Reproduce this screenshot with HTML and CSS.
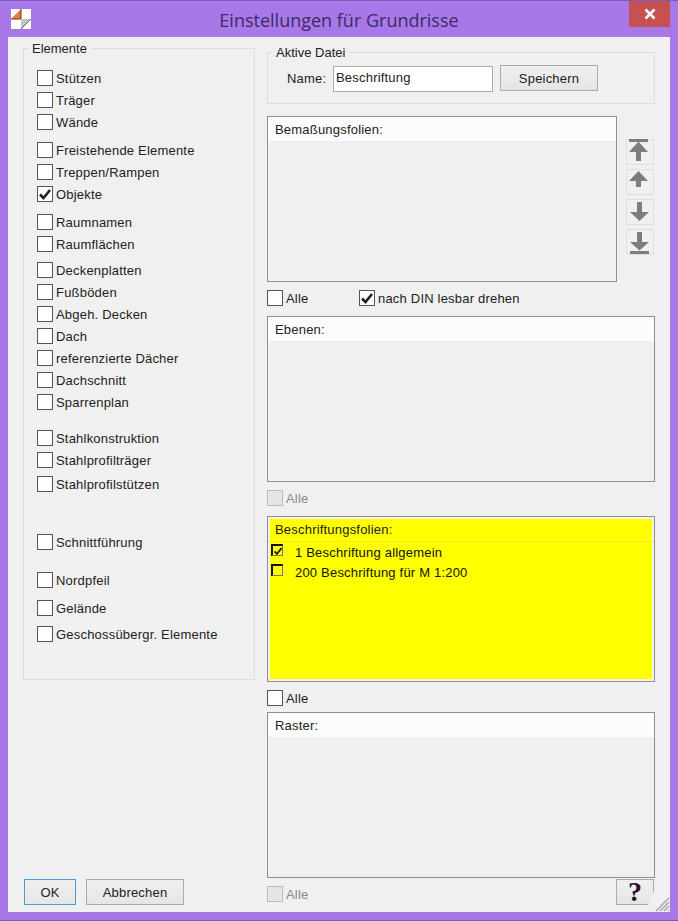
FILE: index.html
```html
<!DOCTYPE html>
<html lang="de">
  <head>
    <meta charset="UTF-8" />
    <title>Einstellungen für Grundrisse</title>
    <link rel="stylesheet" href="styles.css">
  </head>
  <body>
    <svg class="defs" width="0" height="0">
      <symbol id="tick" viewBox="0 0 14 14">
        <path d="M2 7.5 L5.5 11 L12 3" fill="none" stroke="#222" stroke-width="2.6" />
      </symbol>
    </svg>

    <div class="window">
      <!-- Title bar -->
      <div class="titlebar">
        <svg class="logo" width="20" height="20" viewBox="0 0 20 20">
          <rect width="20" height="20" fill="#fff" />
          <path d="M0 10 L10 0 V10 Z" fill="#ee7a3a" />
          <path d="M10 10 H20 L10 20 Z" fill="#c4c4c4" />
          <path d="M10 0 V10 H0" fill="none" stroke="#5a3a2a" stroke-width="1" />
          <path d="M20 10 L10 20" fill="none" stroke="#666" stroke-width="1" />
        </svg>
        <div class="title">Einstellungen für Grundrisse</div>
        <div class="close">
          <svg width="12" height="12" viewBox="0 0 12 12">
            <path d="M1.5 1.5 L10.5 10.5 M10.5 1.5 L1.5 10.5" stroke="#fff" stroke-width="2.6" />
          </svg>
        </div>
      </div>

      <div class="client">
        <!-- Left column -->
        <div class="left">
          <fieldset class="group elements">
            <legend>Elemente</legend>
            <div class="elements-body">
              <div class="check-group">
                <label class="check"><span class="box"></span>Stützen</label>
                <label class="check"><span class="box"></span>Träger</label>
                <label class="check"><span class="box"></span>Wände</label>
              </div>
              <div class="check-group gap-6">
                <label class="check"><span class="box"></span>Freistehende Elemente</label>
                <label class="check"><span class="box"></span>Treppen/Rampen</label>
                <label class="check"><span class="box"><svg><use href="#tick" /></svg></span>Objekte</label>
              </div>
              <div class="check-group gap-6">
                <label class="check"><span class="box"></span>Raumnamen</label>
                <label class="check"><span class="box"></span>Raumflächen</label>
              </div>
              <div class="check-group gap-4">
                <label class="check"><span class="box"></span>Deckenplatten</label>
                <label class="check"><span class="box"></span>Fußböden</label>
                <label class="check"><span class="box"></span>Abgeh. Decken</label>
                <label class="check"><span class="box"></span>Dach</label>
                <label class="check"><span class="box"></span>referenzierte Dächer</label>
                <label class="check"><span class="box"></span>Dachschnitt</label>
                <label class="check"><span class="box"></span>Sparrenplan</label>
              </div>
              <div class="check-group gap-14">
                <label class="check"><span class="box"></span>Stahlkonstruktion</label>
                <label class="check"><span class="box"></span>Stahlprofilträger</label>
              </div>
              <div class="check-group gap-2">
                <label class="check"><span class="box"></span>Stahlprofilstützen</label>
              </div>
              <div class="check-group gap-36">
                <label class="check"><span class="box"></span>Schnittführung</label>
              </div>
              <div class="check-group gap-16">
                <label class="check"><span class="box"></span>Nordpfeil</label>
              </div>
              <div class="check-group gap-6">
                <label class="check"><span class="box"></span>Gelände</label>
              </div>
              <div class="check-group gap-4">
                <label class="check"><span class="box"></span>Geschossübergr. Elemente</label>
              </div>
            </div>
          </fieldset>
          <div class="actions">
            <button class="btn btn-ok">OK</button>
            <button class="btn btn-cancel">Abbrechen</button>
          </div>
        </div>

        <!-- Right column -->
        <div class="right">
          <fieldset class="group active-file">
            <legend>Aktive Datei</legend>
            <div class="active-file-body">
              <span class="name-label">Name:</span>
              <div class="name-input">Beschriftung</div>
              <button class="btn btn-save">Speichern</button>
            </div>
          </fieldset>

          <div class="list-with-arrows">
            <div class="list list-short">
              <div class="list-head">Bemaßungsfolien:</div>
            </div>
            <div class="arrows">
              <div class="arrow">
                <svg width="26" height="24" viewBox="1 1 26 24"><path d="M3 0 H22 V3 H3 Z M12.5 2.5 L22 13 H15 V22 H10 V13 H3 Z" fill="#7d7d7d" /></svg>
              </div>
              <div class="arrow">
                <svg width="26" height="24" viewBox="1 1 26 24"><path d="M12.5 2 L22 12 H15 V18 H10 V12 H3 Z" fill="#7d7d7d" /></svg>
              </div>
              <div class="arrow">
                <svg width="26" height="24" viewBox="1 1 26 24"><path d="M11 3 H16 V13 H23 L13.5 22 L4 13 H11 Z" fill="#7d7d7d" /></svg>
              </div>
              <div class="arrow">
                <svg width="26" height="24" viewBox="1 1 26 24"><path d="M11 3 H16 V13 H23 L13.5 21.5 L4 13 H11 Z M4 22 H23 V25 H4 Z" fill="#7d7d7d" /></svg>
              </div>
            </div>
          </div>

          <div class="all-row">
            <label class="check check-all"><span class="box"></span>Alle</label>
            <label class="check check-din"><span class="box"><svg><use href="#tick" /></svg></span>nach DIN lesbar drehen</label>
          </div>

          <div class="list">
            <div class="list-head">Ebenen:</div>
          </div>
          <div class="all-row">
            <label class="check disabled"><span class="box"></span>Alle</label>
          </div>

          <div class="list list-yellow">
            <div class="list-head">Beschriftungsfolien:</div>
            <div class="list-item"><span class="mini-box"><svg><use href="#tick" /></svg></span>1 Beschriftung allgemein</div>
            <div class="list-item"><span class="mini-box"></span>200 Beschriftung für M 1:200</div>
          </div>
          <div class="all-row all-row-tight">
            <label class="check"><span class="box"></span>Alle</label>
          </div>

          <div class="list">
            <div class="list-head">Raster:</div>
          </div>
          <div class="all-row bottom-row">
            <label class="check disabled"><span class="box"></span>Alle</label>
            <button class="btn btn-help">?</button>
          </div>
        </div>

        <svg class="grip" width="24" height="24" viewBox="0 0 24 24">
          <path d="M2 17 L9 1 H24 V24 H2 Z" fill="#f0f0f0" />
          <path d="M23 10 L10 23 M23 14 L14 23 M23 18 L18 23 M23 22 L22 23" stroke="#a9a9a9" stroke-width="1.6" />
        </svg>
      </div>
    </div>
  </body>
</html>
```

FILE: styles.css
```css
* {
  box-sizing: border-box;
}

html,
body {
  margin: 0;
  padding: 0;
}

body {
  font-family: "Liberation Sans", Arial, sans-serif;
  font-size: 13px;
  color: #222;
}

.defs {
  display: block;
  height: 0;
}

.window {
  width: 678px;
  height: 921px;
  background-color: #a878e9;
  border-top: 1px solid #7b5bb5;
  border-bottom: 1px solid #7b5bb5;
  padding: 0 8px 8px 8px;
  display: flex;
  flex-direction: column;
}

/* Title bar */
.titlebar {
  height: 36px;
  flex: none;
  display: flex;
  align-items: flex-start;
  margin: 0 -8px;
  padding-left: 11px;
}

.logo {
  flex: none;
  margin-top: 8px;
}

.title {
  flex: 1;
  font-family: "Open Sans", sans-serif;
  font-size: 18px;
  line-height: 24px;
  margin-top: 7px;
  text-align: center;
  color: #3b2b63;
  padding-left: 18px;
}

.close {
  flex: none;
  width: 41px;
  height: 26px;
  margin-right: 8px;
  background-color: #c75050;
  display: flex;
  align-items: center;
  justify-content: center;
}

/* Client area */
.client {
  position: relative;
  flex: 1;
  background-color: #f0f0f0;
  display: flex;
  padding: 0 15px 0 15px;
}

.left {
  width: 232px;
  flex: none;
  display: flex;
  flex-direction: column;
  margin-right: 12px;
}

.right {
  width: 388px;
  flex: none;
}

.group {
  margin: 0;
  min-width: 0;
  border: 1px solid #dcdcdc;
  padding: 0;
}

.group legend {
  padding: 0 4px;
  line-height: 15px;
  margin-left: 4px;
}

.elements {
  height: 639px;
  margin-top: 4px;
}

.elements-body {
  padding: 11px 0 0 13px;
}

.check-group {
  display: flex;
  flex-direction: column;
}

.gap-2 { margin-top: 2px; }
.gap-4 { margin-top: 4px; }
.gap-6 { margin-top: 6px; }
.gap-14 { margin-top: 14px; }
.gap-16 { margin-top: 16px; }
.gap-36 { margin-top: 36px; }

.check {
  display: flex;
  align-items: center;
  height: 22px;
  letter-spacing: 0.2px;
}

.box {
  width: 16px;
  height: 16px;
  flex: none;
  margin-right: 3px;
  background-color: #fff;
  border: 1px solid #555;
  display: block;
}

.box svg {
  display: block;
  width: 14px;
  height: 14px;
}

.check.disabled {
  color: #8a8a8a;
}

.check.disabled .box {
  background-color: #e6e6e6;
  border-color: #bcbcbc;
}

.actions {
  display: flex;
  gap: 10px;
  margin-top: 199px;
  padding-left: 1px;
}

.btn {
  font-family: inherit;
  font-size: 13px;
  letter-spacing: 0.2px;
  color: #222;
  height: 26px;
  padding: 0;
  border: 1px solid #acacac;
  background: linear-gradient(#f0f0f0, #e5e5e5);
}

.btn-ok {
  width: 52px;
  border-color: #4a9ad4;
}

.btn-cancel {
  width: 98px;
}

/* Active file box */
.active-file {
  height: 59px;
  margin-top: 8px;
}

.active-file-body {
  display: flex;
  align-items: flex-start;
  padding: 6px 0 0 19px;
}

.name-label {
  width: 46px;
  line-height: 26px;
  letter-spacing: 0.2px;
}

.name-input {
  width: 160px;
  height: 26px;
  background-color: #fff;
  border: 1px solid #aaa;
  line-height: 22px;
  padding-left: 2px;
  letter-spacing: 0.2px;
}

.btn-save {
  width: 98px;
  margin-left: 7px;
  margin-top: -1px;
}

/* Lists */
.list-with-arrows {
  display: flex;
  margin-top: 12px;
}

.list {
  height: 166px;
  border: 1px solid #8a8f98;
  background-color: #f0f0f0;
}

.list-short {
  width: 350px;
}

.list-head {
  height: 24px;
  line-height: 26px;
  padding-left: 7px;
  background-color: #fcfcfd;
  letter-spacing: 0.2px;
}

.list-yellow {
  background-color: #ffff00;
  border-color: #8a8f98;
  box-shadow: inset 0 0 0 2px #f2f2e6;
}

.list-yellow .list-head {
  background-color: transparent;
  border-bottom: 1px solid #eeee20;
  height: 25px;
}

.list-item {
  position: relative;
  height: 20px;
  line-height: 22px;
  padding-left: 27px;
  letter-spacing: 0.2px;
  color: #111;
}

.mini-box {
  position: absolute;
  left: 3px;
  top: 2px;
  width: 12px;
  height: 12px;
  border: 1px solid #777;
  border-top: 2px solid #111;
  border-left: 2px solid #111;
}

.mini-box svg {
  display: block;
  width: 10px;
  height: 10px;
}

.arrows {
  margin: 23px 0 0 9px;
  display: flex;
  flex-direction: column;
  gap: 4px;
}

.arrow {
  width: 28px;
  height: 26px;
  border: 1px solid #dedede;
  overflow: visible;
}

.arrow svg {
  display: block;
  overflow: visible;
}

.all-row {
  display: flex;
  align-items: flex-start;
  height: 34px;
  padding-top: 5px;
}

.all-row-tight {
  height: 30px;
}

.check-all {
  width: 92px;
}

.bottom-row {
  justify-content: space-between;
  padding-top: 1px;
}

.bottom-row .check {
  margin-top: 4px;
}

.btn-help {
  width: 38px;
  font-size: 28px;
  font-weight: bold;
  margin-right: 1px;
  line-height: 24px;
  color: #2a1030;
  font-family: "Liberation Serif", serif;
}

.grip {
  position: absolute;
  right: 0;
  bottom: 0;
}
```
